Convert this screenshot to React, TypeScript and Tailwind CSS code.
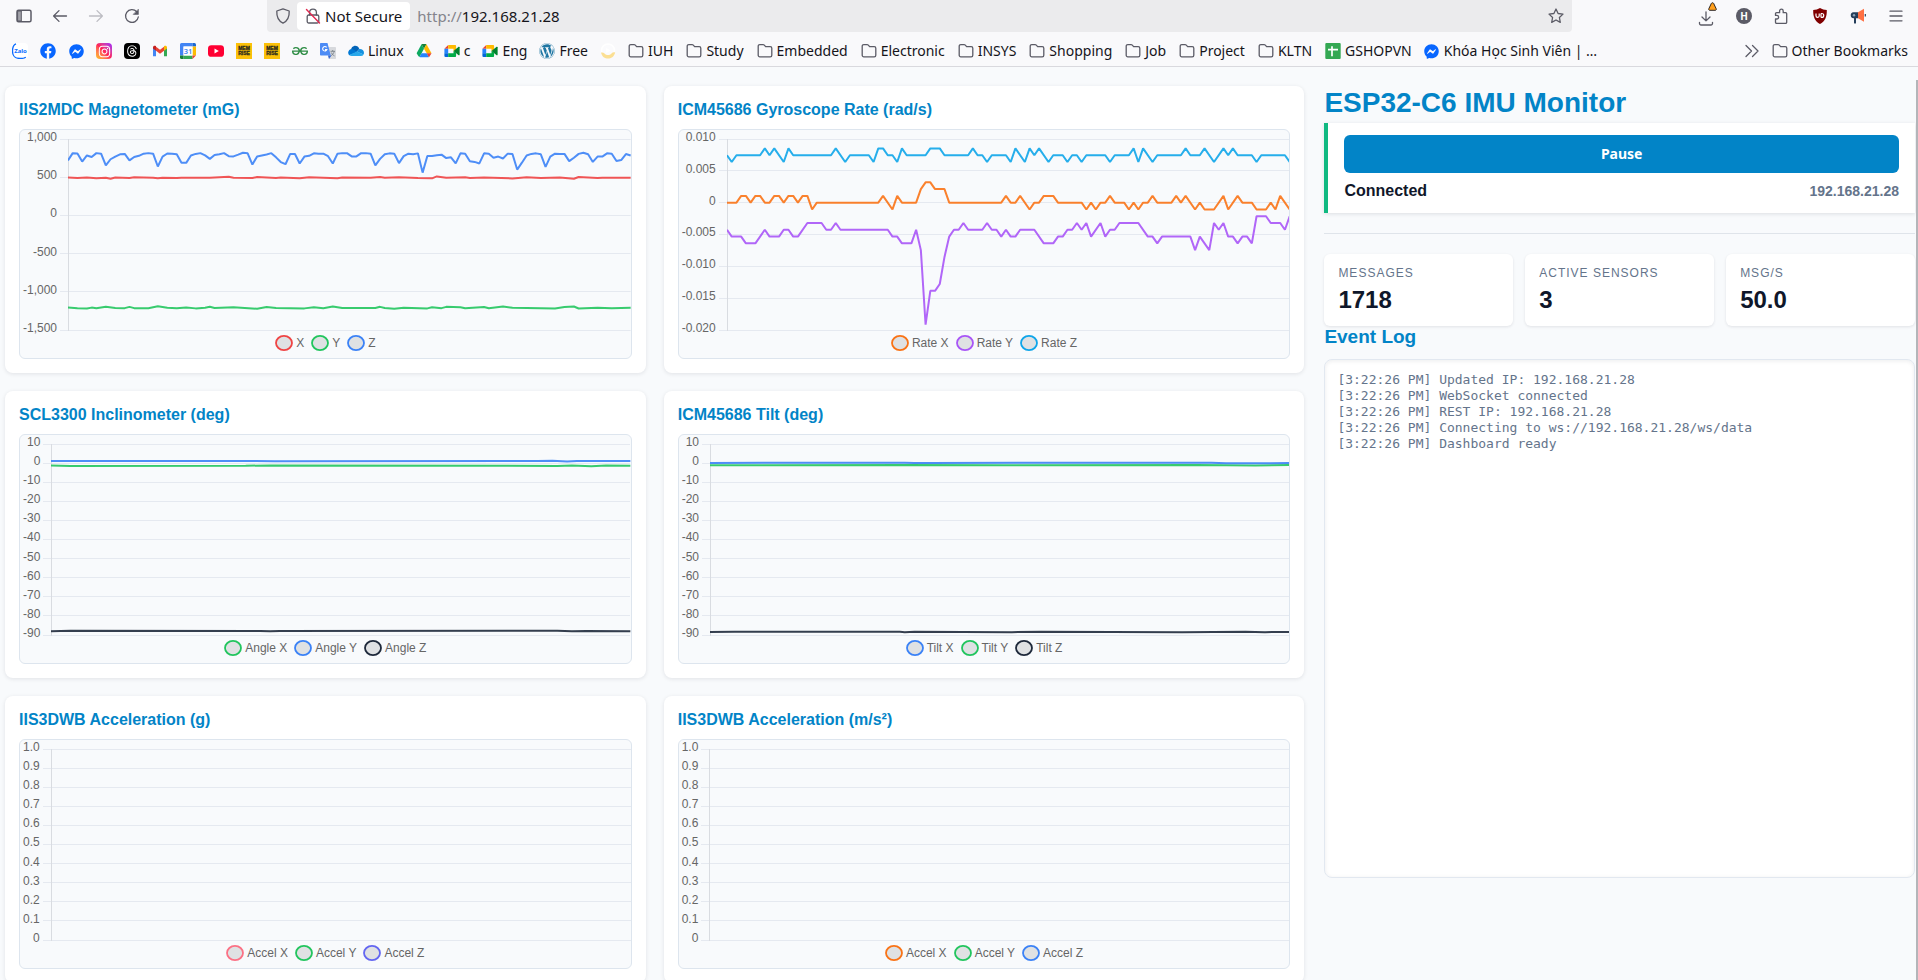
import { useState } from "react";
import type { ReactNode } from "react";
import { FaFacebook, FaFacebookMessenger, FaInstagram, FaWordpress } from "react-icons/fa";
import { FaThreads } from "react-icons/fa6";
import { SiGeeksforgeeks } from "react-icons/si";

/* ------------------------------------------------------------------ */
/* Sensor data: [sample index, value] pairs, linear in between         */
/* ------------------------------------------------------------------ */

type Point = [number, number];

const SAMPLES = 120;
const GYRO_LSB = 0.001065;

const magZ = [
  720, 815, 810, 705, 785, 765, 815, 808, 655, 735, 770, 800, 805, 720, 765, 780, 808, 815, 808, 640,
  770, 810, 808, 800, 690, 688, 785, 805, 815, 785, 740, 790, 800, 815, 775, 772, 795, 820, 812, 665,
  772, 785, 798, 815, 760, 698, 670, 805, 803, 680, 770, 780, 812, 808, 808, 775, 680, 808, 815, 815,
  772, 772, 815, 815, 808, 655, 740, 800, 812, 808, 685, 775, 808, 800, 812, 560, 778, 778, 788, 795,
  750, 760, 680, 812, 808, 710, 700, 680, 812, 808, 755, 770, 745, 808, 803, 600, 690, 785, 805, 812,
  800, 635, 770, 808, 805, 805, 710, 755, 805, 820, 800, 700, 770, 770, 812, 808, 712, 725, 803, 785,
].map((v, i): Point => [i, v]);

const magX: Point[] = [
  [0, 497], [2, 490], [4, 496], [6, 486], [8, 493], [9, 480], [10, 497], [13, 489], [14, 499], [18, 494],
  [19, 486], [20, 494], [23, 488], [24, 494], [30, 493], [34, 506], [35, 492], [39, 489], [40, 503], [44, 490],
  [45, 496], [49, 486], [51, 500], [54, 494], [57, 487], [58, 496], [64, 493], [66, 502], [67, 492], [70, 500],
  [74, 488], [77, 485], [78, 510], [80, 492], [84, 500], [85, 489], [88, 496], [94, 484], [97, 500], [100, 490],
  [104, 496], [107, 479], [108, 502], [112, 488], [113, 494], [119, 492],
];

const magY: Point[] = [
  [0, -1206], [2, -1214], [4, -1218], [5, -1207], [6, -1216], [8, -1197], [10, -1211], [12, -1214], [13, -1197],
  [14, -1214], [17, -1216], [19, -1190], [21, -1210], [23, -1214], [25, -1204], [27, -1217], [29, -1208],
  [30, -1195], [31, -1212], [35, -1203], [40, -1222], [42, -1200], [44, -1212], [50, -1217], [52, -1203],
  [54, -1214], [56, -1192], [58, -1213], [65, -1211], [66, -1197], [67, -1213], [69, -1222], [71, -1208],
  [76, -1217], [77, -1202], [79, -1214], [80, -1197], [83, -1202], [84, -1215], [88, -1200], [89, -1216],
  [92, -1192], [94, -1209], [103, -1218], [105, -1200], [107, -1193], [108, -1218], [112, -1208], [115, -1215],
  [119, -1209],
];

const lsb = (points: Point[]) => points.map(([i, v]): Point => [i, v * GYRO_LSB]);

const gyroX = lsb([
  [0, 0], [2, 0], [3, 1], [4, 1], [5, 0], [6, 1], [7, 1], [8, 0], [9, 0], [10, 1], [11, 1], [12, 0], [13, 1],
  [14, 1], [15, 0], [16, 1], [17, 1], [18, -1], [19, 0], [32, 0], [33, 1], [35, -1], [36, 1], [37, 0], [40, 0],
  [41, 2], [42, 3], [43, 3], [44, 2], [46, 2], [47, 0], [58, 0], [59, 1], [60, 0], [61, 0], [62, 1], [64, -1],
  [65, 0], [66, 0], [67, 1], [69, 1], [70, 0], [75, 0], [76, -1], [77, 0], [78, -1], [79, 0], [80, 0], [81, 1],
  [82, 0], [84, 0], [85, -1], [86, 0], [87, -1], [88, 0], [89, 0], [90, 1], [91, 0], [94, 0], [95, 1], [96, 0],
  [97, 1], [99, -1], [100, 0], [101, -1], [103, -1], [105, 1], [106, -1], [108, 1], [109, 0], [111, 0],
  [112, -1], [114, -1], [115, 0], [116, -1], [117, 1], [119, -1],
]);

const gyroY = lsb([
  [0, -4], [1, -5], [3, -5], [4, -6], [6, -6], [8, -4], [9, -5], [11, -5], [12, -4], [13, -4], [14, -5], [15, -5],
  [17, -3], [20, -3], [21, -4], [22, -4], [23, -3], [24, -4], [34, -4], [35, -5], [36, -5], [37, -6], [39, -6],
  [40, -4], [41, -7], [42, -18], [43, -13], [44, -13], [45, -12], [46, -8], [47, -5], [48, -4], [49, -4],
  [50, -3], [51, -4], [54, -4], [55, -3], [56, -4], [57, -4], [58, -5], [59, -4], [60, -5], [61, -5], [62, -4],
  [65, -4], [67, -6], [69, -6], [70, -5], [71, -5], [72, -4], [73, -4], [74, -3], [75, -4], [76, -3], [77, -5],
  [79, -3], [80, -5], [81, -4], [82, -4], [83, -3], [87, -3], [89, -5], [90, -5], [91, -6], [92, -5], [98, -5],
  [99, -7], [100, -5], [102, -7], [103, -3], [104, -4], [105, -3], [106, -5], [107, -5], [108, -6], [109, -5],
  [110, -5], [111, -6], [112, -2], [114, -2], [115, -3], [117, -3], [118, -4], [119, -2],
]);

const gyroZ = lsb([
  [0, 7], [1, 6], [2, 7], [7, 7], [8, 8], [9, 7], [10, 8], [12, 6], [13, 8], [14, 7], [22, 7], [23, 8], [25, 6],
  [26, 7], [30, 7], [31, 6], [32, 8], [33, 8], [34, 7], [35, 7], [36, 6], [37, 8], [38, 7], [42, 7], [43, 8],
  [45, 8], [46, 7], [51, 7], [52, 8], [53, 7], [54, 7], [55, 6], [56, 7], [59, 7], [60, 6], [61, 8], [63, 6],
  [64, 8], [65, 7], [66, 8], [68, 6], [69, 7], [71, 7], [72, 6], [73, 7], [74, 7], [75, 6], [76, 7], [80, 7],
  [81, 6], [82, 7], [85, 7], [86, 8], [87, 6], [88, 8], [90, 6], [91, 7], [96, 7], [97, 8], [98, 7], [100, 7],
  [101, 8], [103, 6], [105, 8], [106, 7], [107, 8], [108, 7], [111, 7], [112, 6], [113, 7], [118, 7], [119, 6],
]);

/* ------------------------------------------------------------------ */
/* Charts                                                              */
/* ------------------------------------------------------------------ */

interface Series {
  name: string;
  color: string;
  points: Point[];
}

interface ChartSpec {
  title: string;
  min: number;
  max: number;
  ticks: string[];
  series: Series[];
}

const RED = "#ef4444";
const GREEN = "#22c55e";
const BLUE = "#3b82f6";
const DARK = "#1e293b";

const degreeTicks = ["10", "0", "-10", "-20", "-30", "-40", "-50", "-60", "-70", "-80", "-90"];
const unitTicks = ["1.0", "0.9", "0.8", "0.7", "0.6", "0.5", "0.4", "0.3", "0.2", "0.1", "0"];

const charts: ChartSpec[] = [
  {
    title: "IIS2MDC Magnetometer (mG)",
    min: -1500,
    max: 1000,
    ticks: ["1,000", "500", "0", "-500", "-1,000", "-1,500"],
    series: [
      { name: "X", color: RED, points: magX },
      { name: "Y", color: GREEN, points: magY },
      { name: "Z", color: BLUE, points: magZ },
    ],
  },
  {
    title: "ICM45686 Gyroscope Rate (rad/s)",
    min: -0.02,
    max: 0.01,
    ticks: ["0.010", "0.005", "0", "-0.005", "-0.010", "-0.015", "-0.020"],
    series: [
      { name: "Rate X", color: "#f97316", points: gyroX },
      { name: "Rate Y", color: "#a855f7", points: gyroY },
      { name: "Rate Z", color: "#0ea5e9", points: gyroZ },
    ],
  },
  {
    title: "SCL3300 Inclinometer (deg)",
    min: -90,
    max: 10,
    ticks: degreeTicks,
    series: [
      { name: "Angle X", color: GREEN, points: [[0, -1.2], [4, -1.5], [40, -1.4], [45, -1.2], [104, -1.5], [107, -1.2], [111, -1.6], [114, -1.3], [119, -1.4]] },
      { name: "Angle Y", color: BLUE, points: [[0, 1.1], [42, 1.1], [46, 1], [100, 1.1], [103, 1.2], [106, 0.9], [108, 1.1], [119, 1.1]] },
      { name: "Angle Z", color: DARK, points: [[0, -88], [4, -87.8], [43, -87.9], [45, -88.1], [47, -87.9], [104, -87.8], [107, -88.1], [110, -87.9], [119, -88]] },
    ],
  },
  {
    title: "ICM45686 Tilt (deg)",
    min: -90,
    max: 10,
    ticks: degreeTicks,
    series: [
      { name: "Tilt X", color: BLUE, points: [[0, 0.1], [40, 0.2], [42, 0], [45, 0.1], [103, 0.2], [106, -0.1], [119, 0]] },
      { name: "Tilt Y", color: GREEN, points: [[0, -1.1], [40, -1], [60, -1.1], [100, -1], [112, -1.2], [119, -1]] },
      { name: "Tilt Z", color: DARK, points: [[0, -88.4], [5, -88.3], [39, -88.3], [40, -88.5], [42, -88.3], [62, -88.5], [68, -88.3], [97, -88.5], [110, -88.3], [114, -88.5], [119, -88.4]] },
    ],
  },
  {
    title: "IIS3DWB Acceleration (g)",
    min: 0,
    max: 1,
    ticks: unitTicks,
    series: [
      { name: "Accel X", color: "#fb7185", points: [] },
      { name: "Accel Y", color: GREEN, points: [] },
      { name: "Accel Z", color: "#6366f1", points: [] },
    ],
  },
  {
    title: "IIS3DWB Acceleration (m/s²)",
    min: 0,
    max: 1,
    ticks: unitTicks,
    series: [
      { name: "Accel X", color: "#f97316", points: [] },
      { name: "Accel Y", color: GREEN, points: [] },
      { name: "Accel Z", color: BLUE, points: [] },
    ],
  },
];

const PLOT_TOP = 1;
const PLOT_HEIGHT = 191;

function GridLines({ count, width }: { count: number; width: number }) {
  return (
    <g stroke="#e5e9f0" strokeWidth="1" shapeRendering="crispEdges">
      {Array.from({ length: count }, (_, i) => {
        const y = Math.floor(PLOT_TOP + (i * PLOT_HEIGHT) / (count - 1)) + 0.5;
        return <line key={i} x1="0" x2={width} y1={y} y2={y} vectorEffect="non-scaling-stroke" />;
      })}
    </g>
  );
}

function Chart({ spec }: { spec: ChartSpec }) {
  const { min, max, ticks, series } = spec;
  const toY = (v: number) => PLOT_TOP + ((max - v) / (max - min)) * PLOT_HEIGHT;
  return (
    <div className="flex h-[230px] flex-col overflow-hidden rounded-md border border-[#dde5ee] bg-[#f8fafc] text-xs text-[#666]">
      <div className="flex h-[205px] shrink-0">
        <div className="flex flex-col justify-between px-[3px] text-right">
          {ticks.map((t) => (
            <span key={t} className="leading-[14px]">
              {t}
            </span>
          ))}
        </div>
        <svg className="mt-2 h-[194px] w-2 shrink-0" viewBox="0 0 8 194" aria-hidden="true">
          <GridLines count={ticks.length} width={8} />
        </svg>
        <svg
          className="mt-2 h-[194px] min-w-0 flex-1"
          viewBox={`0 0 ${SAMPLES - 1} 194`}
          preserveAspectRatio="none"
          role="img"
          aria-label={spec.title}
        >
          <GridLines count={ticks.length} width={SAMPLES - 1} />
          <line x1="0" x2="0" y1="1" y2="193" stroke="#d9dce1" strokeWidth="2" vectorEffect="non-scaling-stroke" />
          {[...series].reverse().map((s) => (
            <polyline
              key={s.name}
              points={s.points.map(([i, v]) => `${i},${toY(v).toFixed(2)}`).join(" ")}
              fill="none"
              stroke={s.color}
              strokeWidth="2"
              strokeOpacity="0.9"
              strokeLinejoin="bevel"
              vectorEffect="non-scaling-stroke"
            />
          ))}
        </svg>
      </div>
      <ul className="flex h-4 items-center justify-center gap-[7px]">
        {series.map((s) => (
          <li key={s.name} className="flex items-center gap-[3px] leading-[14px]">
            <svg className="h-4 w-[18px]" viewBox="0 0 18 16" aria-hidden="true">
              <ellipse cx="9" cy="8" rx="8" ry="7.1" fill="#dfe1e3" stroke={s.color} strokeWidth="1.8" />
            </svg>
            {s.name}
          </li>
        ))}
      </ul>
    </div>
  );
}

function ChartCard({ spec }: { spec: ChartSpec }) {
  return (
    <section className="min-w-0 rounded-lg bg-white p-3.5 shadow-[0_1px_4px_rgba(15,23,42,0.1)]">
      <h2 className="mb-2.5 text-base leading-[19px] font-bold text-[#0284c7]">{spec.title}</h2>
      <Chart spec={spec} />
    </section>
  );
}

/* ------------------------------------------------------------------ */
/* Browser icons                                                       */
/* ------------------------------------------------------------------ */

function Line({ d, className = "", children }: { d?: string; className?: string; children?: ReactNode }) {
  return (
    <svg
      className={`size-4 shrink-0 ${className}`}
      viewBox="0 0 16 16"
      fill="none"
      stroke="currentColor"
      strokeWidth="1.3"
      strokeLinecap="round"
      strokeLinejoin="round"
      aria-hidden="true"
    >
      {d && <path d={d} />}
      {children}
    </svg>
  );
}

const FolderIcon = () => (
  <Line
    className="text-[#5b5b66]"
    d="M1.2 3.2a1.6 1.6 0 0 1 1.6-1.6h3.3c.5 0 .9.2 1.2.5l1.3 1.5h4.6a1.6 1.6 0 0 1 1.6 1.6v7a1.6 1.6 0 0 1-1.6 1.6H2.8a1.6 1.6 0 0 1-1.6-1.6z"
  />
);

const ZaloIcon = () => (
  <svg className="size-4" viewBox="0 0 16 16" aria-hidden="true">
    <rect width="16" height="16" rx="4" fill="#fff" />
    <path d="M4 .8C1.600 1.700.5 3.500.5 8c0 5 1.800 7.400 7.500 7.500 2.500 0 4.500-.4 5.800-1.300" fill="none" stroke="#0a6cff" strokeWidth="1.300" />
    <text x="8.500" y="10" textAnchor="middle" fontSize="6" fontWeight="700" fill="#0a6cff" fontFamily="Noto Sans, sans-serif">
      Zalo
    </text>
  </svg>
);

const InstagramIcon = () => (
  <span className="flex size-4 items-center justify-center rounded bg-linear-to-tr from-[#ffc400] via-[#ff1f5a] to-[#a000ff] text-white">
    <FaInstagram size={13} />
  </span>
);

const ThreadsIcon = () => (
  <span className="flex size-4 items-center justify-center rounded bg-black text-white">
    <FaThreads size={12} />
  </span>
);

const GmailIcon = () => (
  <svg className="size-4" viewBox="0 0 16 16" aria-hidden="true">
    <path d="M1 4v9.200h3V7z" fill="#4285f4" />
    <path d="M12 7v6.200h3V4z" fill="#34a853" />
    <path d="M4 3.800v4L8 10.800l4-3v-4L8 6.800z" fill="#ea4335" />
    <path d="M1 4.200C1 2.800 2.700 2.200 3.800 3.100L4 3.300v4.500l-3-2.200z" fill="#c5221f" />
    <path d="M15 4.200c0-1.400-1.700-2-2.800-1.100l-.2.200v4.500l3-2.200z" fill="#fbbc04" />
  </svg>
);

const CalendarIcon = () => (
  <svg className="size-4" viewBox="0 0 16 16" aria-hidden="true">
    <path d="M1.500 0h11v3.500H3.500v9H0v-11A1.500 1.500 0 0 1 1.500 0z" fill="#4285f4" />
    <path d="M12.500 0h2A1.500 1.500 0 0 1 16 1.500v2h-3.500z" fill="#1967d2" />
    <path d="M12.500 3.500H16v9h-3.500z" fill="#fbbc04" />
    <path d="M3.500 12.500h9V16h-9z" fill="#34a853" />
    <path d="M0 12.500h3.500V16h-2A1.500 1.500 0 0 1 0 14.500z" fill="#188038" />
    <path d="M12.500 16v-3.500H16z" fill="#ea4335" />
    <path d="M3.500 3.500h9v9h-9z" fill="#fff" />
    <text x="8" y="10.800" textAnchor="middle" fontSize="7.500" fontWeight="600" fill="#4285f4" fontFamily="Noto Sans, sans-serif">
      31
    </text>
  </svg>
);

const YoutubeIcon = () => (
  <svg className="size-4" viewBox="0 0 16 16" aria-hidden="true">
    <rect y="2.200" width="16" height="11.600" rx="3.400" fill="#ff0033" />
    <path d="M6.500 5.500v5L10.800 8z" fill="#fff" />
  </svg>
);

const MemriseIcon = () => (
  <svg className="size-4" viewBox="0 0 16 16" aria-hidden="true">
    <rect width="16" height="16" fill="#fcc109" />
    <g fontSize="5" fontWeight="700" fill="#2b2a1e" stroke="#2b2a1e" strokeWidth="0.300" textAnchor="middle" fontFamily="Liberation Sans, sans-serif">
      <text x="8" y="7.300">MEM</text>
      <text x="8" y="12.300">RISE</text>
    </g>
  </svg>
);

const TranslateIcon = () => (
  <svg className="size-4" viewBox="0 0 16 16" aria-hidden="true">
    <path d="M6 4h9.200a.8.8 0 0 1 .8.8v10.400a.8.8 0 0 1-.8.800H9z" fill="#d7d9dd" />
    <path d="M.8 0h6.700l3.300 12.500H.8a.8.8 0 0 1-.8-.8V.8A.8.8 0 0 1 .8 0z" fill="#4c8bf5" />
    <path d="m8 12.500 1 3.500 2.500-3.500z" fill="#3367d6" />
    <path d="M6.600 4.400a2.200 2.200 0 1 0 .3 2.200H5" fill="none" stroke="#fff" strokeWidth="1.100" />
    <path d="M10.500 8.300h4.500M12.700 7v1.300M14.200 8.400c-.4 1.800-1.700 3.300-3 4.200M11.300 9.500c.5 1.300 1.700 2.600 3.200 3.400" fill="none" stroke="#6f7780" strokeWidth=".8" />
  </svg>
);

const OneDriveIcon = () => (
  <svg className="size-4" viewBox="0 0 16 16" aria-hidden="true">
    <path d="M6.500 2.800a4.700 4.700 0 0 1 4.800 3.100L8.500 9 2.900 6.200A4.700 4.700 0 0 1 6.500 2.800z" fill="#0364b8" />
    <path d="M3 6a3.700 3.700 0 0 1 2.300.6L9.300 9l-7.900 3.300A3.700 3.700 0 0 1 3 6z" fill="#0078d4" />
    <path d="M9 8.800 11.200 6h.6c2.300 0 4.200 1.600 4.200 3.800 0 .7-.2 1.300-.5 1.700z" fill="#1490df" />
    <path d="m9 8.500 6.600 2.900a3.200 3.200 0 0 1-2.700 1.700H3.700a3.700 3.700 0 0 1-2.500-1z" fill="#28a8ea" />
  </svg>
);

const DriveIcon = () => (
  <svg className="size-4" viewBox="0 0 16 16" aria-hidden="true">
    <path d="M5.500 1.300 8 5.700 3.500 14a2 2 0 0 1-1.200-.9L.6 10.200z" fill="#0da960" />
    <path d="M5.500 1.300A2 2 0 0 1 6.600 1h2.800a2 2 0 0 1 1.100.3L8 5.700z" fill="#188038" />
    <path d="m10.500 1.300 5 8.900H10.700L8 5.700z" fill="#ffba00" />
    <path d="M15.500 10.200h-5l2.200 4c.5-.2.800-.5 1-.9z" fill="#ea4335" />
    <path d="M.6 10.200h10l2.100 3.800a2 2 0 0 1-1 .3H4.500a2 2 0 0 1-1-.3L5.500 10.200z" fill="#2684fc" />
  </svg>
);

const MeetIcon = () => (
  <svg className="size-4" viewBox="0 0 16 16" aria-hidden="true">
    <path d="M4.200 2v3.800H.4z" fill="#ea4335" />
    <path d="M.4 5.800h3.800v4.500H.4z" fill="#2684fc" />
    <path d="M.4 10.300h3.800V14H1.500A1.100 1.100 0 0 1 .4 12.900z" fill="#0066da" />
    <path d="M4.200 2h6.700c.8 0 1.200.5 1.200 1.200v3L9.500 8.300V5.800H4.200z" fill="#ffba00" />
    <path d="M4.200 10.300h5.300V8L12.100 9.800v3c0 .8-.4 1.200-1.200 1.200H4.200z" fill="#00ac47" />
    <path d="m9.500 8 5.100-4.200c.4-.3 1-.1 1 .5v7.400c0 .6-.6.8-1 .5z" fill="#00832d" />
  </svg>
);

const FadedPlayIcon = () => (
  <svg className="size-4" viewBox="0 0 16 16" aria-hidden="true">
    <circle cx="8" cy="7.500" r="6.500" fill="#fbfbfd" stroke="#fff" strokeWidth="1.500" />
    <path d="M1 9.500C2 14 5 15.600 8 15.600s6-1.600 7.200-6.100c-1.400-.6-2.800-.2-3.700 1-2 2-5 2-7 0-.9-1-2-1.300-3.500-1z" fill="#fbdf93" />
    <path d="M6.200 5v5L10.500 7.500z" fill="#fff" />
  </svg>
);

const SheetIcon = () => (
  <svg className="size-4" viewBox="0 0 16 16" aria-hidden="true">
    <rect x=".3" width="15.400" height="16" rx="1" fill="#34a853" />
    <path d="M3 6.700h10M7 3.200v10" stroke="#fff" strokeWidth="1.700" />
  </svg>
);

const MessengerIcon = () => <FaFacebookMessenger size={15} className="text-[#0866ff]" />;

/* ------------------------------------------------------------------ */
/* Browser chrome                                                      */
/* ------------------------------------------------------------------ */

interface Bookmark {
  icon: ReactNode;
  label?: string;
  name: string;
  isFolder?: boolean;
}

const folder = (label: string): Bookmark => ({ icon: <FolderIcon />, label, name: label, isFolder: true });

const bookmarks: Bookmark[] = [
  { icon: <ZaloIcon />, name: "Zalo" },
  { icon: <FaFacebook size={16} className="text-[#0866ff]" />, name: "Facebook" },
  { icon: <MessengerIcon />, name: "Messenger" },
  { icon: <InstagramIcon />, name: "Instagram" },
  { icon: <ThreadsIcon />, name: "Threads" },
  { icon: <GmailIcon />, name: "Gmail" },
  { icon: <CalendarIcon />, name: "Calendar" },
  { icon: <YoutubeIcon />, name: "YouTube" },
  { icon: <MemriseIcon />, name: "Memrise" },
  { icon: <MemriseIcon />, name: "Memrise courses" },
  { icon: <SiGeeksforgeeks size={16} className="text-[#2f8d46]" />, name: "GeeksforGeeks" },
  { icon: <TranslateIcon />, name: "Translate" },
  { icon: <OneDriveIcon />, label: "Linux", name: "Linux" },
  { icon: <DriveIcon />, name: "Drive" },
  { icon: <MeetIcon />, label: "c", name: "c" },
  { icon: <MeetIcon />, label: "Eng", name: "Eng" },
  { icon: <FaWordpress size={16} className="text-[#1f76a3]" />, label: "Free", name: "Free" },
  { icon: <FadedPlayIcon />, name: "Player" },
  folder("IUH"),
  folder("Study"),
  folder("Embedded"),
  folder("Electronic"),
  folder("INSYS"),
  folder("Shopping"),
  folder("Job"),
  folder("Project"),
  folder("KLTN"),
  { icon: <SheetIcon />, label: "GSHOPVN", name: "GSHOPVN" },
  { icon: <MessengerIcon />, label: "Khóa Học Sinh Viên | …", name: "Khóa Học Sinh Viên" },
];

function BookmarkLink({ item }: { item: Bookmark }) {
  return (
    <a
      href="#"
      aria-label={item.name}
      className={`flex shrink-0 items-center gap-1 whitespace-nowrap ${item.isFolder ? "pr-px" : ""}`}
    >
      <span className="flex size-4 items-center justify-center">{item.icon}</span>
      {item.label}
    </a>
  );
}

function ToolButton({ label, children }: { label: string; children: ReactNode }) {
  return (
    <button type="button" aria-label={label} className="relative flex size-4 items-center justify-center">
      {children}
    </button>
  );
}

function BrowserBar() {
  const [host, setHost] = useState("192.168.21.28");
  return (
    <header className="shrink-0 border-b border-[#d9d9de] bg-[#f9f9fb] font-['Noto_Sans',sans-serif] text-[#15141a]">
      <div className="flex h-8 items-center text-[15px] text-[#5b5b66]">
        <div className="flex w-[267px] shrink-0 items-center gap-5 pl-4">
          <ToolButton label="Sidebar">
            <Line>
              <rect x="1" y="2.200" width="14" height="11.600" rx="1.500" strokeWidth="1.500" />
              <path d="M2 3h3.300v10H2z" fill="currentColor" fillOpacity=".55" strokeWidth="1" />
            </Line>
          </ToolButton>
          <ToolButton label="Back">
            <Line d="M14.500 8H1.600M7 2.600 1.600 8 7 13.400" />
          </ToolButton>
          <ToolButton label="Forward">
            <Line className="text-[#bdbdc3]" d="M1.500 8h12.900M9 2.600 14.400 8 9 13.400" />
          </ToolButton>
          <ToolButton label="Reload">
            <Line>
              <path d="M14.300 9A6.400 6.400 0 1 1 12.700 3.700" />
              <path d="M14.400 1.500v4.900H9.500z" fill="currentColor" strokeWidth=".6" />
            </Line>
          </ToolButton>
        </div>
        <div className="flex h-8 min-w-0 grow items-center rounded-b bg-[#ebebed] pr-2 pl-2">
          <Line d="M8 .9 14.200 3c.3 5.500-1.200 9.700-6.200 12.200C3 12.700 1.500 8.500 1.800 3z" />
          <button type="button" className="ml-1.5 flex h-7 items-center gap-1 rounded bg-white pr-2 pl-2 whitespace-nowrap text-[#15141a]">
            <Line className="text-[#5b5b66]">
              <rect x="2.200" y="7" width="11.600" height="8" rx="1.500" />
              <path d="M4.600 7V4.500a3.400 3.400 0 0 1 6.800 0V7" />
              <path d="m1.500 1.500 13 13.500" stroke="#e22850" strokeWidth="1.400" />
            </Line>
            Not Secure
          </button>
          <label htmlFor="address" className="ml-[7px] text-[#84848c]">
            http://
          </label>
          <input
            id="address"
            value={host}
            onChange={(e) => setHost(e.target.value)}
            className="min-w-0 grow bg-transparent text-[#15141a] outline-none"
          />
          <ToolButton label="Bookmark this page">
            <Line d="m8 1 2.100 4.500 4.900.6-3.600 3.400.9 4.900L8 12l-4.300 2.400.9-4.900L1 6.100l4.900-.6z" />
          </ToolButton>
        </div>
        <div className="ml-[126px] flex shrink-0 items-center gap-[22px] pr-3.5">
          <ToolButton label="Downloads">
            <Line className="mt-1.5" d="M8 .8v9M4 6l4 3.900L12 6M1.500 11.300v1.200a1.500 1.500 0 0 0 1.500 1.500h10a1.500 1.500 0 0 0 1.500-1.500v-1.200" />
            <svg className="absolute -top-1.5 left-2.5 h-[9px] w-[9px]" viewBox="0 0 9 9" aria-hidden="true">
              <path d="M3.300 1.500C3.700.5 5.300.5 5.700 1.500l2.500 5.300c.3.700 0 1.500-.9 1.500H1.700C.8 8.300.5 7.500.8 6.800z" fill="#ff9f1c" stroke="#15141a" strokeWidth=".9" />
            </svg>
          </ToolButton>
          <ToolButton label="Account H">
            <span className="flex size-4 shrink-0 items-center justify-center rounded-full bg-[#5b5b66] text-[10px] leading-none font-bold text-white">
              H
            </span>
          </ToolButton>
          <ToolButton label="Extensions">
            <Line d="M1.500 13.500V11h1.300a1.700 1.700 0 0 0 0-3.600H1.500V5.800A1.100 1.100 0 0 1 2.600 4.700h3V3a1.800 1.800 0 0 1 3.600 0v1.700h2.400a1.100 1.100 0 0 1 1.100 1.100v8.400a1.100 1.100 0 0 1-1.100 1.100h-9a1.100 1.100 0 0 1-1.100-1.100z" />
          </ToolButton>
          <ToolButton label="Content blocker">
            <svg className="size-4" viewBox="0 0 16 16" aria-hidden="true">
              <path d="M8 0c2 1.300 4.300 2 6.800 2C15 9 13 13.400 8 16 3 13.400 1 9 1.200 2 3.700 2 6 1.300 8 0z" fill="#800000" />
              <path d="M4 5.500v2.300a1.600 1.600 0 0 0 3.200 0V5.500M9 5.400v4M9 5.500h.8a1.900 1.900 0 0 1 0 3.900H9" fill="none" stroke="#fff" strokeWidth="1.200" />
            </svg>
          </ToolButton>
          <ToolButton label="Announcements">
            <svg className="size-4" viewBox="0 0 16 16" aria-hidden="true">
              <path d="M3.500 4.200H8v6H6v4.600c0 .6-.5.9-1 .9s-1-.3-1-.9v-4.600a3 3 0 0 1-.5-6z" fill="#253f5b" />
              <circle cx="4" cy="7.200" r="1.200" fill="#8fa3b8" />
              <path d="m8 4.200 6-3.400v13l-6-3.600z" fill="#ff7043" />
              <path d="M15.300 6v2.500" stroke="#253f5b" strokeWidth="1.200" />
            </svg>
          </ToolButton>
          <ToolButton label="Menu">
            <Line d="M2 3.200h12M2 8h12M2 12.800h12" />
          </ToolButton>
        </div>
      </div>
      <nav aria-label="Bookmarks" className="flex h-[34px] items-center gap-3 pt-1 pr-[9px] pl-3 text-sm">
        {bookmarks.map((b) => (
          <BookmarkLink key={b.name} item={b} />
        ))}
        <div className="ml-auto flex items-center gap-3">
          <button type="button" aria-label="More bookmarks">
            <Line className="text-[#5b5b66]" d="m2 2.500 5.500 5.500L2 13.500M8.500 2.500 14 8l-5.500 5.500" />
          </button>
          <BookmarkLink item={folder("Other Bookmarks")} />
        </div>
      </nav>
    </header>
  );
}

/* ------------------------------------------------------------------ */
/* Side panel                                                          */
/* ------------------------------------------------------------------ */

const stats = [
  { label: "MESSAGES", value: "1718" },
  { label: "ACTIVE SENSORS", value: "3" },
  { label: "MSG/S", value: "50.0" },
];

const events = [
  "Updated IP: 192.168.21.28",
  "WebSocket connected",
  "REST IP: 192.168.21.28",
  "Connecting to ws://192.168.21.28/ws/data",
  "Dashboard ready",
];

function SidePanel() {
  return (
    <aside className="min-w-0">
      <h1 className="text-[28px] leading-9 font-bold text-[#0284c7]">ESP32-C6 IMU Monitor</h1>
      <div className="mt-0.5 border-l-4 border-[#10b981] bg-white px-4 py-3 shadow-[0_1px_4px_rgba(15,23,42,0.12)]">
        <button
          type="button"
          className="h-[38px] w-full rounded-md bg-[#0284c7] font-['Noto_Sans',sans-serif] text-sm font-bold text-white"
        >
          Pause
        </button>
        <div className="mt-[7px] flex h-[21px] items-center justify-between font-bold">
          <span className="text-base text-[#0f172a]">Connected</span>
          <span className="text-sm text-[#64748b]">192.168.21.28</span>
        </div>
      </div>
      <hr className="my-5 border-[#dfe4ea]" />
      <dl className="grid grid-cols-3 gap-3">
        {stats.map((s) => (
          <div key={s.label} className="h-[72px] rounded-md bg-white px-3.5 pt-2.5 shadow-[0_1px_3px_rgba(15,23,42,0.1)]">
            <dt className="text-xs leading-[18px] tracking-[1px] text-[#64748b]">{s.label}</dt>
            <dd className="mt-1 text-2xl leading-7 font-bold text-[#0f172a]">{s.value}</dd>
          </div>
        ))}
      </dl>
      <h2 className="text-[19px] leading-[22px] font-bold text-[#0284c7]">Event Log</h2>
      <ol className="mt-[11px] h-[519px] rounded-lg border border-[#e2e8f0] bg-white p-3 font-['DejaVu_Sans_Mono',monospace] text-[13px] leading-4 text-[#64748b] shadow-[inset_0_1px_4px_rgba(15,23,42,0.08)]">
        {events.map((e) => (
          <li key={e}>[3:22:26 PM] {e}</li>
        ))}
      </ol>
    </aside>
  );
}

export default function App() {
  return (
    <div className="flex h-screen flex-col overflow-hidden bg-[#f8fafc] font-['Liberation_Sans',Arial,sans-serif]">
      <BrowserBar />
      <div className="relative min-h-0 flex-1 overflow-hidden">
        <main className="grid grid-cols-[11fr_5fr] items-start gap-5 pr-[3px] pl-[5px]">
          <div className="grid grid-cols-2 gap-[18px] pt-[19px] pb-5">
            {charts.map((c) => (
              <ChartCard key={c.title} spec={c} />
            ))}
          </div>
          <div className="pt-[18px]">
            <SidePanel />
          </div>
        </main>
        <div className="absolute top-[13px] right-0 bottom-0 w-0.5 bg-[#b4b5b9]" />
      </div>
    </div>
  );
}
